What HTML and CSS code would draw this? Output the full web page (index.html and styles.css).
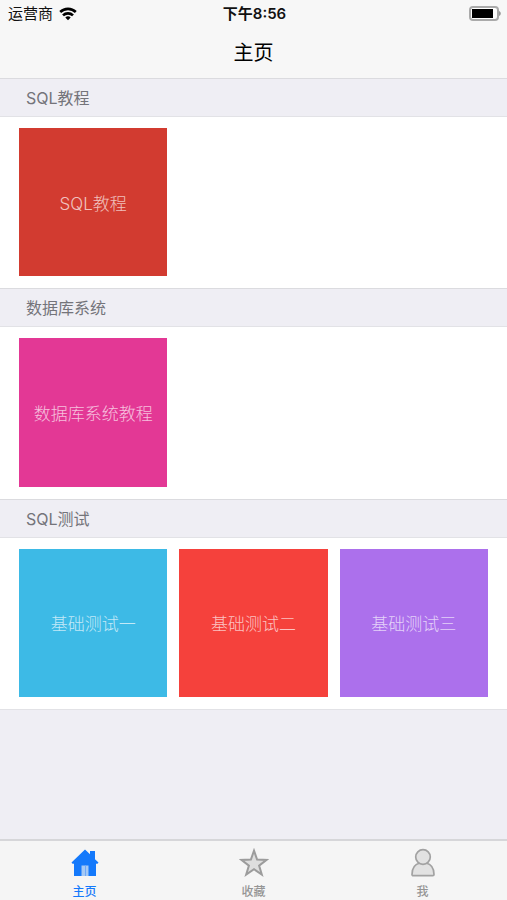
FILE: index.html
```html
<!DOCTYPE html>
<html lang="zh-CN">
<head>
<meta charset="utf-8">
<meta name="viewport" content="width=device-width, initial-scale=1">
<title>主页</title>
<link rel="stylesheet" href="styles.css">
</head>
<body>
<header class="top">
  <div class="status">
    <div class="carrier">
      <span>运营商</span>
      <svg width="18" height="14" viewBox="0 0 18 14" fill="none" stroke="#000" stroke-width="2.6" aria-hidden="true">
        <path d="M1.200 5a11.200 11.200 0 0 1 15.600 0"/>
        <path d="M4 8.400a7.100 7.100 0 0 1 10 0"/>
        <path d="M9 13.200L6.300 10.500a3.900 3.900 0 0 1 5.400 0z" fill="#000" stroke="none"/>
      </svg>
    </div>
    <time class="clock">下午8:56</time>
    <svg class="battery" width="32" height="14" viewBox="0 0 32 14" aria-hidden="true">
      <rect x="1" y="0" width="28" height="13" rx="3" fill="#fff" stroke="#aaa" stroke-width="2"/>
      <rect x="3" y="2" width="21" height="9" fill="#000"/>
      <path d="M30 4c2.400 .7 2.400 4.300 0 5z" fill="#999"/>
    </svg>
  </div>
  <h1 class="title">主页</h1>
</header>
<main class="content">
  <section>
    <h2 class="heading">SQL教程</h2>
    <div class="grid">
      <button class="tile brick" type="button">SQL教程</button>
    </div>
  </section>
  <section>
    <h2 class="heading">数据库系统</h2>
    <div class="grid">
      <button class="tile pink" type="button">数据库系统教程</button>
    </div>
  </section>
  <section class="last">
    <h2 class="heading">SQL测试</h2>
    <div class="grid">
      <button class="tile blue" type="button">基础测试一</button>
      <button class="tile red" type="button">基础测试二</button>
      <button class="tile purple" type="button">基础测试三</button>
    </div>
  </section>
</main>
<nav class="tabs">
  <a class="tab active" href="#home">
    <svg width="30" height="30" viewBox="0 0 30 30" aria-hidden="true">
      <path d="M15 1.500L20 6.300V3h5v8.200l3.500 3.300-1 1.200H26V28H4V15.700H2.500l-1-1.200z" fill="#1479fb"/>
      <path d="M11.500 28V17.500h7V28z" fill="#a5c9f5"/>
      <path d="M15.500 17.500V28" stroke="#6fa9f8"/>
    </svg>
    <span>主页</span>
  </a>
  <a class="tab" href="#favorites">
    <svg width="30" height="30" viewBox="0 0 30 30" fill="#dedede" stroke="#9c9c9c" stroke-width="2" aria-hidden="true">
      <path d="M15 2.700l3.100 8.900 9.500 .3-7.500 5.700 2.700 8.900-7.800-5.300-7.800 5.300 2.700-8.900-7.500-5.700 9.500-.3z"/>
    </svg>
    <span>收藏</span>
  </a>
  <a class="tab" href="#me">
    <svg width="30" height="30" viewBox="0 0 30 30" fill="#e2e2e2" stroke="#a2a2a2" stroke-width="1.700" aria-hidden="true">
      <path d="M4 26.500c0-6.500 3.500-10.500 8-11.500h6c4.500 1 8 5 8 11.500 0 .7-.5 1.200-1.200 1.200H5.200c-.7 0-1.200-.5-1.200-1.200z"/>
      <circle cx="15" cy="9" r="7.300"/>
    </svg>
    <span>我</span>
  </a>
</nav>
</body>
</html>
```
FILE: styles.css
```css
* {
  box-sizing: border-box;
}

body {
  margin: 0;
  min-height: 100vh;
  display: flex;
  flex-direction: column;
  background: #efeef4;
  font-family: Inter, "Noto Sans CJK SC", sans-serif;
}

.top {
  height: 78px;
  background: #f7f7f7;
}

.status {
  display: grid;
  grid-template-columns: 1fr auto 1fr;
  align-items: center;
  height: 28px;
  padding: 0 6px 0 8px;
  font-size: 15px;
  line-height: 28px;
  color: #111;
}

.carrier {
  display: flex;
  align-items: center;
  gap: 6px;
}

.clock {
  font-weight: 600;
}

.battery {
  justify-self: end;
  overflow: visible;
}

.title {
  margin: 0;
  font-size: 20px;
  font-weight: 400;
  line-height: 50px;
  text-align: center;
  color: #000;
}

.content {
  flex: 1;
}

.heading {
  margin: 0;
  height: 39px;
  padding: 0 26px;
  border-top: 1px solid #dbdbdf;
  border-bottom: 1px solid #e2e2e6;
  background: #efeef4;
  font-size: 16px;
  font-weight: 400;
  line-height: 38px;
  color: #74747a;
}

.grid {
  display: grid;
  grid-template-columns: repeat(3, 1fr);
  gap: 12px;
  padding: 11px 19px 12px;
  background: #fff;
}

.last {
  border-bottom: 1px solid #e2e2e6;
}

.tile {
  aspect-ratio: 1;
  min-width: 0;
  padding: 0;
  border: 0;
  font-family: inherit;
  font-size: 17px;
  font-weight: 300;
  color: rgba(255, 255, 255, 0.7);
}

.brick {
  background: #d23b30;
}

.pink {
  background: #e33895;
}

.blue {
  background: #3dbae6;
}

.red {
  background: #f5413c;
}

.purple {
  background: #ac70ec;
}

.tabs {
  display: grid;
  grid-template-columns: repeat(3, 1fr);
  height: 61px;
  border-top: 2px solid #d6d6d9;
  background: #f5f5f5;
}

.tab {
  display: flex;
  flex-direction: column;
  align-items: center;
  gap: 2px;
  padding-top: 7px;
  font-size: 12px;
  font-weight: 500;
  line-height: 24px;
  color: #959595;
  text-decoration: none;
}

.tab span {
  height: 22px;
}

.active {
  color: #1479fb;
}
```
